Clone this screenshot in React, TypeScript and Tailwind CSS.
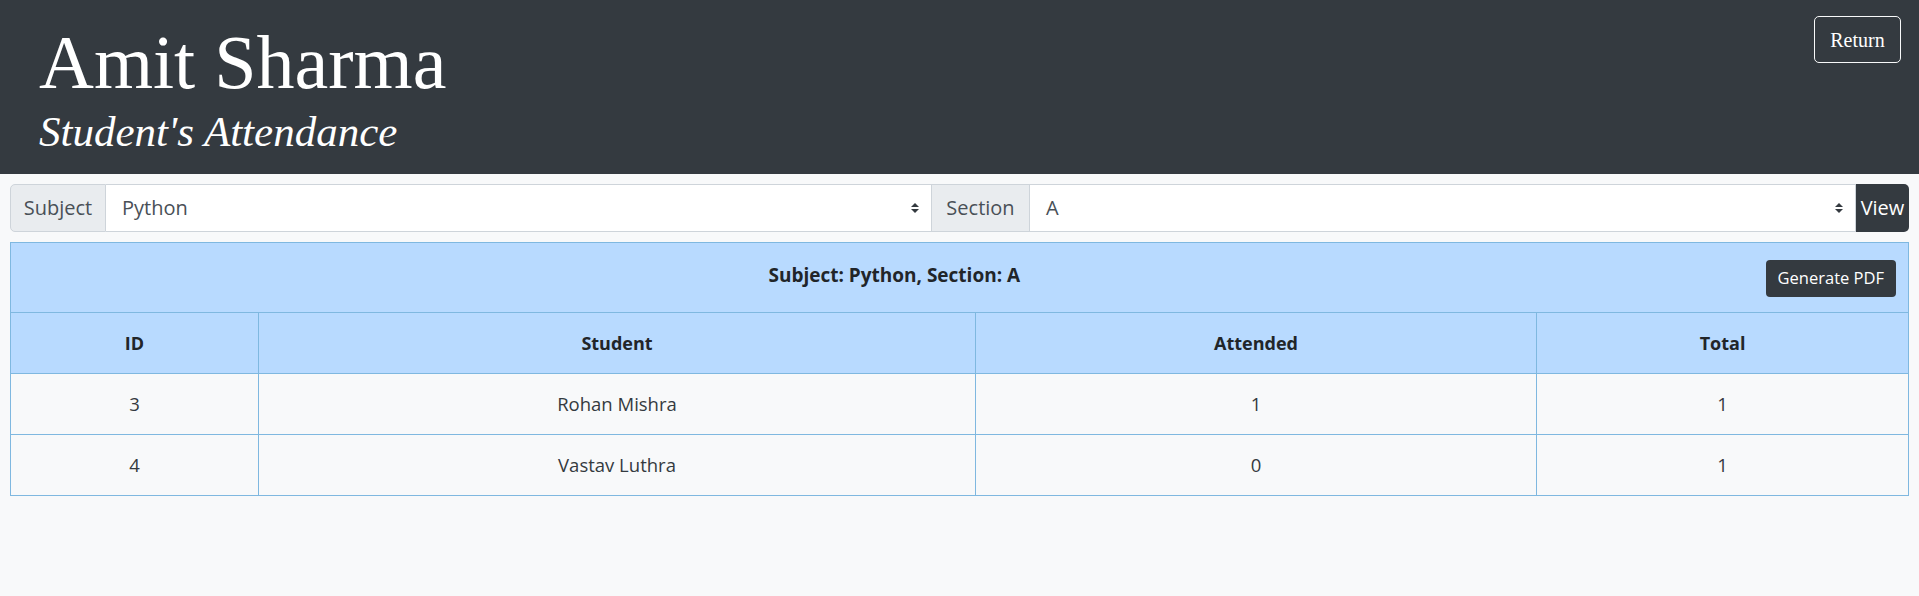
import React from 'react';

interface Row {
  id: number;
  student: string;
  attended: number;
  total: number;
}

const rows: Row[] = [
  { id: 3, student: 'Rohan Mishra', attended: 1, total: 1 },
  { id: 4, student: 'Vastav Luthra', attended: 0, total: 1 },
];

function SelectArrow() {
  return (
    <svg width="8" height="10" viewBox="0 0 4 5" className="shrink-0">
      <path fill="#343a40" d="M2 0L0 2h4zm0 5L0 3h4z" />
    </svg>
  );
}

function FakeSelect({ value }: { value: string }) {
  return (
    <div className="flex-1 flex items-center justify-between bg-white border border-[#ced4da] border-l-0 pl-4 pr-3 text-[#495057]">
      <span>{value}</span>
      <SelectArrow />
    </div>
  );
}

export default function App() {
  return (
    <div className="min-h-[596px] bg-[#f8f9fa] font-['Open_Sans',sans-serif] text-[#212529]">
      {/* Header */}
      <div className="bg-[#343a40] h-[174px] flex justify-between items-start text-white font-['Liberation_Serif',serif]">
        <div className="pl-[39px] pt-[24px]">
          <h1 className="text-[76px] leading-none">Amit Sharma</h1>
          <p className="mt-[10px] text-[43px] italic leading-none">Student's Attendance</p>
        </div>
        <button className="mt-[16px] mr-[18px] w-[87px] h-[47px] border border-[#f8f9fa] rounded-[5px] text-[20px] text-white">
          Return
        </button>
      </div>

      <div className="px-[10px] pt-[10px]">
        {/* Filters */}
        <div className="flex h-[48px] text-[20px]">
          <div className="w-[96px] flex items-center justify-center bg-[#e9ecef] border border-[#ced4da] rounded-l-[5px] text-[#495057]">
            Subject
          </div>
          <FakeSelect value="Python" />
          <div className="w-[98px] flex items-center justify-center bg-[#e9ecef] border border-[#ced4da] border-l-0 text-[#495057]">
            Section
          </div>
          <FakeSelect value="A" />
          <button className="w-[53px] bg-[#343a40] text-white rounded-r-[5px]">View</button>
        </div>

        {/* Table */}
        <table className="mt-[10px] w-full border-collapse border border-[#7fb8e0] text-[18px]">
          <thead>
            <tr className="bg-[#b8daff] h-[70px]">
              <th colSpan={4} className="border border-[#7fb8e0] px-3">
                <div className="flex items-center">
                  <span className="flex-1 text-center text-[19px] font-bold -mt-[5px]">
                    Subject: Python, Section: A
                  </span>
                  <button className="h-[37px] px-[12px] mt-[1px] bg-[#343a40] text-white text-[16.5px] font-normal rounded-[4px]">
                    Generate PDF
                  </button>
                </div>
              </th>
            </tr>
            <tr className="bg-[#b8daff] h-[61px]">
              <th className="w-[248px] border border-[#7fb8e0] font-bold">ID</th>
              <th className="w-[717px] border border-[#7fb8e0] font-bold">Student</th>
              <th className="w-[561px] border border-[#7fb8e0] font-bold">Attended</th>
              <th className="border border-[#7fb8e0] font-bold">Total</th>
            </tr>
          </thead>
          <tbody>
            {rows.map((r) => (
              <tr key={r.id} className="bg-[#f8f9fa] h-[61px] text-center text-[#343a40] text-[18.5px]">
                <td className="border border-[#7fb8e0]">{r.id}</td>
                <td className="border border-[#7fb8e0]">{r.student}</td>
                <td className="border border-[#7fb8e0]">{r.attended}</td>
                <td className="border border-[#7fb8e0]">{r.total}</td>
              </tr>
            ))}
          </tbody>
        </table>
      </div>
    </div>
  );
}
